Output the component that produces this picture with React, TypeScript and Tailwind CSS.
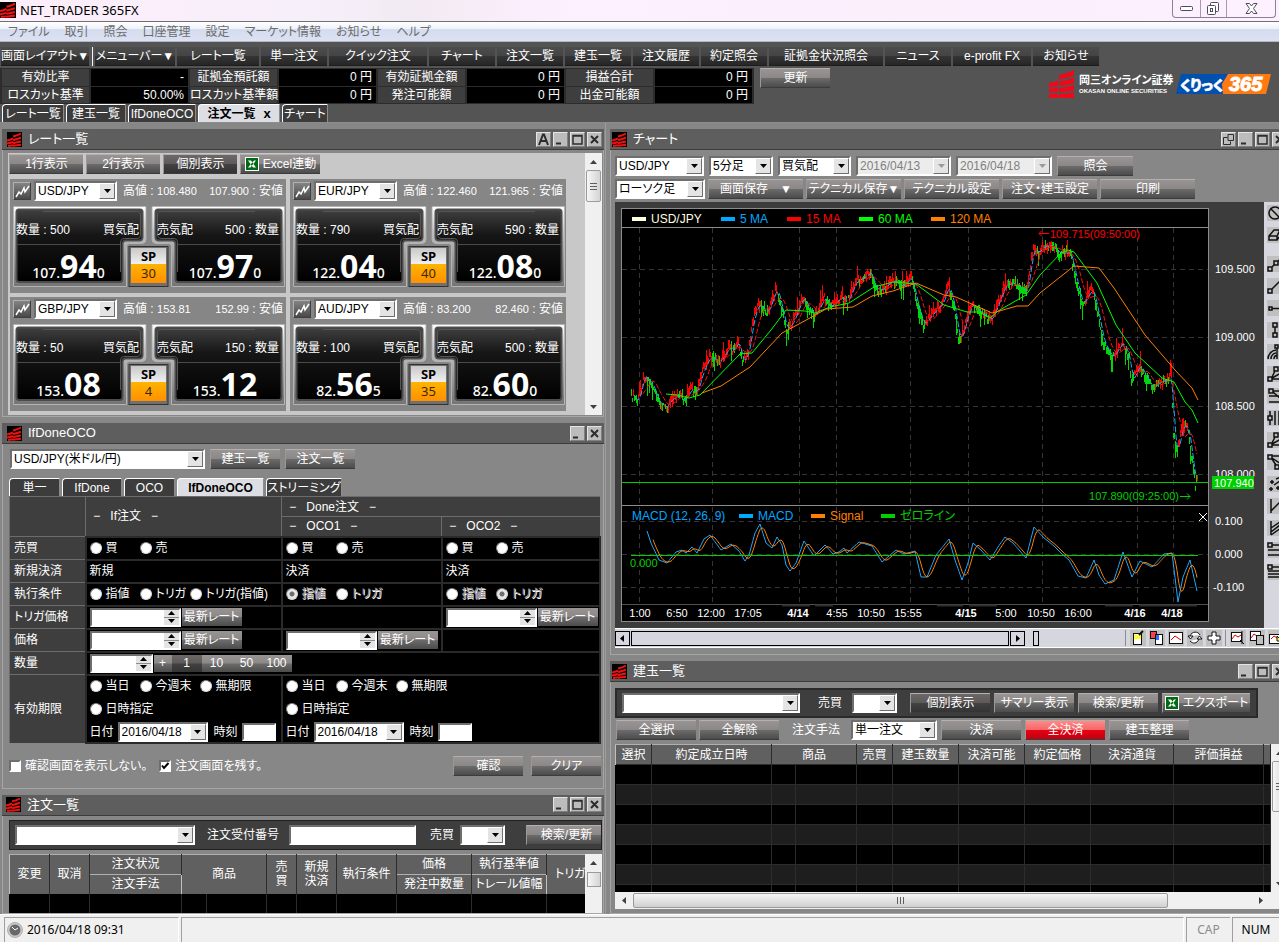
import type { ReactNode } from "react";

const BTN =
  "flex h-5 shrink-0 items-center justify-center overflow-hidden whitespace-nowrap border-t border-l border-t-[#b4b0b0] border-l-[#9c9898] border-b border-b-[#3c3c3c] text-white";
const BTN_LIGHT = "bg-[linear-gradient(#989494,#8c8888_48%,#6c6a6a_52%,#4c4c4c)]";
const BTN_DARK = "bg-[linear-gradient(#6c6868,#5e5a5a_48%,#434141_52%,#343434)]";
const BTN_RED = "bg-[linear-gradient(#ff8a86,#f46868_48%,#e60012_52%,#c00010)]";

const INSET =
  "border-2 border-t-[#6e6e6e] border-l-[#6e6e6e] border-r-white border-b-white bg-white text-black";

function Btn({
  children,
  w,
  tone = BTN_LIGHT,
}: {
  children: ReactNode;
  w: string;
  tone?: string;
}) {
  return (
    <button type="button" className={`${BTN} ${tone} ${w}`}>
      {children}
    </button>
  );
}

function Arrow({ dir = "down", color = "#000" }: { dir?: string; color?: string }) {
  const points: Record<string, string> = {
    down: "0,0 7,0 3.5,4",
    up: "0,4 7,4 3.5,0",
    left: "5,0 5,7 1,3.5",
    right: "2,0 2,7 6,3.5",
  };
  const tall = dir === "left" || dir === "right";
  return (
    <svg width="7" height={tall ? 7 : 4} aria-hidden="true">
      <polygon points={points[dir]} fill={color} />
    </svg>
  );
}

function Select({
  label,
  value = "",
  w,
  disabled = false,
}: {
  label: string;
  value?: string;
  w: string;
  disabled?: boolean;
}) {
  return (
    <div className={`relative h-5 shrink-0 ${INSET} ${w}`}>
      <select
        aria-label={label}
        defaultValue={value}
        disabled={disabled}
        className={`block h-4 w-full appearance-none pl-[2px] text-xs leading-4 outline-none ${
          disabled ? "bg-[#ececec] text-[#808080]" : "bg-white text-black"
        }`}
      >
        <option value={value}>{value}</option>
      </select>
      <span className="pointer-events-none absolute top-0 right-0 flex h-4 w-4 items-center justify-center border border-t-white border-l-white border-r-[#6e6e6e] border-b-[#6e6e6e] bg-[#e4e4e4]">
        <Arrow color={disabled ? "#9a9a9a" : "#000"} />
      </span>
    </div>
  );
}

function Stepper({ label, w }: { label: string; w: string }) {
  return (
    <div className={`flex h-[19px] shrink-0 ${INSET} ${w}`}>
      <input aria-label={label} className="w-0 flex-1 bg-white px-1 text-xs outline-none" />
      <div className="flex w-[15px] flex-col bg-[#e4e4e4]">
        <button type="button" aria-label={`${label} 増`} className="flex flex-1 items-center justify-center border-b border-[#8c8c8c]">
          <Arrow dir="up" />
        </button>
        <button type="button" aria-label={`${label} 減`} className="flex flex-1 items-center justify-center">
          <Arrow />
        </button>
      </div>
    </div>
  );
}

function Radio({
  name,
  label,
  w = "",
  checked = false,
  disabled = false,
}: {
  name: string;
  label: string;
  w?: string;
  checked?: boolean;
  disabled?: boolean;
}) {
  return (
    <label
      className={`flex shrink-0 items-center gap-1 whitespace-nowrap ${w} ${
        disabled ? "text-[#a8a8a8] [text-shadow:1px_1px_0_#ffffff]" : ""
      }`}
    >
      <input
        type="radio"
        name={name}
        defaultChecked={checked}
        disabled={disabled}
        className={`h-3 w-3 shrink-0 appearance-none rounded-full border border-t-[#808080] border-l-[#808080] border-r-[#d8d8d8] border-b-[#d8d8d8] ${
          checked ? "bg-[radial-gradient(#6e6e6e_2px,#e8e8e8_3px)]" : "bg-white"
        }`}
      />
      {label}
    </label>
  );
}

function Mark({ size = "h-[15px] w-[15px]" }: { size?: string }) {
  return (
    <svg viewBox="0 0 15 15" className={`shrink-0 bg-black ${size}`} aria-hidden="true">
      <g fill="none" stroke="#f01010" strokeWidth="2">
        <path d="M6 4.500Q10 3.800 14 1.500M0 8.500Q3 8 6 6.500M6 8.200Q10 7 14 5.800M0 11.500Q3 11 6 10M6 11.200Q10 10.200 14 9.500M1 14Q3 13.800 6 13.300M6 13.800Q10 13.200 14 12.800" />
      </g>
    </svg>
  );
}

function CaptionButton({ kind }: { kind: string }) {
  return (
    <button
      type="button"
      aria-label={kind}
      className="flex h-[15px] w-[15px] items-center justify-center border border-t-[#e4e4e4] border-l-[#e4e4e4] border-r-[#808080] border-b-[#808080] bg-[#bcbcbc]"
    >
      <svg width="13" height="13" viewBox="0 0 13 13" fill="none" stroke="#2c2c2c" aria-hidden="true">
        {kind === "min" && <path d="M2 10.500h5" strokeWidth="2" />}
        {kind === "max" && <path d="M2 2.500h9v8.500h-9zM2 3h9" strokeWidth="1.500" />}
        {kind === "close" && <path d="M3 3l7 7M10 3l-7 7" strokeWidth="2" />}
        {kind === "font" && <path d="M2 12 6 1.500h1L11 12M4 8h5" strokeWidth="2" />}
        {kind === "detach" && <path d="M6 1.500h5.500v6H6zM5.500 4.500h-4v7h7v-3" />}
      </svg>
    </button>
  );
}

function Pane({
  title,
  controls,
  children,
  className = "",
  headClass = "pl-[5px]",
  bodyClass = "",
}: {
  title: string;
  controls: string[];
  children: ReactNode;
  className?: string;
  headClass?: string;
  bodyClass?: string;
}) {
  return (
    <section className={`flex flex-col ${className}`}>
      <header className={`flex h-[21px] shrink-0 items-center gap-[6px] border-b border-[#3c3c3c] bg-[#5e5e5e] ${headClass}`}>
        <Mark />
        <h2 className="flex-1 text-[13px] leading-5 text-white">{title}</h2>
        <div className="flex gap-[2px] pr-[2px]">
          {controls.map((kind) => (
            <CaptionButton key={kind} kind={kind} />
          ))}
        </div>
      </header>
      <div className={`min-h-0 flex-1 overflow-hidden border border-t-0 border-[#a6a6a6] bg-[#878787] ${bodyClass}`}>
        {children}
      </div>
    </section>
  );
}

function VScroll({ thumb }: { thumb: string }) {
  return (
    <div className="flex w-[17px] shrink-0 flex-col items-center bg-[#f0f0f0]">
      <span className="flex h-[17px] shrink-0 items-center">
        <Arrow dir="up" color="#404040" />
      </span>
      <span
        className={`flex w-[15px] shrink-0 flex-col items-center justify-center gap-[2px] rounded-xs border border-[#9a9a9a] bg-[linear-gradient(90deg,#f6f6f6,#d4d4d4)] ${thumb}`}
      >
        <i className="h-px w-[7px] bg-[#606060]" />
        <i className="h-px w-[7px] bg-[#606060]" />
        <i className="h-px w-[7px] bg-[#606060]" />
      </span>
      <span className="flex-1" />
      <span className="flex h-[17px] shrink-0 items-center">
        <Arrow color="#404040" />
      </span>
    </div>
  );
}

function ExcelIcon() {
  return (
    <svg width="14" height="14" viewBox="0 0 14 14" className="mr-1 shrink-0" aria-hidden="true">
      <rect width="14" height="14" fill="#fff" />
      <rect x="1" y="1" width="12" height="12" fill="#006a14" />
      <path d="M3 3.500h3l5 7H8zM11 3.500H9L3 10.500h2.500z" fill="#fff" />
    </svg>
  );
}

/* ---------- top area ---------- */

const menus = ["ファイル", "取引", "照会", "口座管理", "設定", "マーケット情報", "お知らせ", "ヘルプ"];

const tools = [
  { label: "メニューバー▼", w: "w-20" },
  { label: "レート一覧", w: "w-[82px]" },
  { label: "単一注文", w: "w-[66px]" },
  { label: "クイック注文", w: "w-[98px]" },
  { label: "チャート", w: "w-[66px]" },
  { label: "注文一覧", w: "w-[66px]" },
  { label: "建玉一覧", w: "w-[66px]" },
  { label: "注文履歴", w: "w-[66px]" },
  { label: "約定照会", w: "w-[66px]" },
  { label: "証拠金状況照会", w: "w-[114px]" },
  { label: "ニュース", w: "w-[66px]" },
  { label: "e-profit FX", w: "w-[78px]" },
  { label: "お知らせ", w: "w-[66px]" },
];

const account = [
  [
    ["有効比率", "-"],
    ["証拠金預託額", "0 円"],
    ["有効証拠金額", "0 円"],
    ["損益合計", "0 円"],
  ],
  [
    ["ロスカット基準", "50.00%"],
    ["ロスカット基準額", "0 円"],
    ["発注可能額", "0 円"],
    ["出金可能額", "0 円"],
  ],
];

function TitleBar() {
  return (
    <header className="flex h-[22px] shrink-0 items-start gap-1 border-b border-[#707070] bg-[linear-gradient(90deg,#fdeefb,#f6effa_26%,#f2eaf2_32%,#fdf0ff_45%,#fbeffc_70%,#fdf0ff)] pr-[3px] font-['Noto_Sans','Noto_Sans_CJK_JP',sans-serif]">
      <div className="pt-[2px]">
        <Mark size="h-4 w-4" />
      </div>
      <h1 className="flex-1 text-[13px] leading-5 text-black">NET_TRADER 365FX</h1>
      <div className="flex h-[18px] overflow-hidden rounded-b border border-t-0 border-[#8a8290]">
        <button type="button" aria-label="最小化" className="flex w-7 items-center justify-center border-r border-[#a49cac]">
          <svg width="13" height="6" aria-hidden="true">
            <rect x="0.500" y="0.500" width="12" height="4" rx="1" fill="#fff" stroke="#4c4c5c" />
          </svg>
        </button>
        <button type="button" aria-label="元に戻す" className="flex w-[26px] items-center justify-center border-r border-[#a49cac]">
          <svg width="13" height="13" fill="#fff" stroke="#4c4c5c" aria-hidden="true">
            <rect x="3.500" y="0.500" width="8" height="9" rx="1" />
            <rect x="0.500" y="3.500" width="8" height="9" rx="1" />
            <rect x="3.500" y="6.500" width="2" height="3" />
          </svg>
        </button>
        <button type="button" aria-label="閉じる" className="flex w-12 items-center justify-center">
          <svg width="13" height="11" viewBox="0 0 13 11" aria-hidden="true">
            <path
              d="M1 .5h3.500L6.500 3l2-2.500H12L8.500 5.500 12 10.500H8.500l-2-2.500-2 2.500H1l3.500-5z"
              fill="#fff"
              stroke="#4c4c5c"
            />
          </svg>
        </button>
      </div>
    </header>
  );
}

function Logos() {
  return (
    <div className="mr-2 flex items-center gap-1 self-start pt-[2px]">
      <svg width="26" height="28" viewBox="0 0 26 28" fill="#f00818" aria-hidden="true">
        <path d="M10 5Q18 4 25 0V5.500Q18 8.500 10 9.500zM10 11.500Q18 10.500 25 7.500V13Q18 15.500 10 16zM10 18Q18 17 25 15V20.500Q18 22 10 22.500zM10 24Q18 23.500 25 22.500V28H10zM0 13Q5 12.500 9 10.500V15.500Q5 17 0 17.500zM0 19Q5 18.500 9 17V21.500Q5 22.500 0 23zM0 24.500Q5 24 9 23.500V28H0z" />
      </svg>
      <div className="w-[93px] whitespace-nowrap text-white">
        <p className="text-[11px] leading-[14px] font-bold">岡三オンライン証券</p>
        <p className="text-[6px] leading-[9px] font-bold">OKASAN ONLINE SECURITIES</p>
      </div>
      <svg width="95" height="21" viewBox="0 0 95 21" aria-hidden="true">
        <path d="M5 0h42l-5 20H0z" fill="#0050b0" />
        <path d="M47 0h48l-5 20H42z" fill="#ff7a10" />
        <path d="M47 0h5l-6 10 1 10h-5l-3-10z" fill="#0050b0" />
        <text x="4" y="16" fontSize="14" fontWeight="900" fill="#fff" stroke="#fff" strokeWidth=".5" fontFamily="Noto Sans CJK JP">
          くりっく
        </text>
        <text x="53" y="17" fontSize="20" fontWeight="900" fontStyle="italic" fill="#fff" stroke="#fff" fontFamily="Liberation Sans">
          365
        </text>
      </svg>
    </div>
  );
}

function Tab({ label, w, active = false, closable = false }: { label: string; w: string; active?: boolean; closable?: boolean }) {
  return (
    <button
      type="button"
      role="tab"
      aria-selected={active}
      className={`flex h-[18px] shrink-0 items-center justify-center gap-2 overflow-hidden rounded-tl border-t border-l border-r border-t-white border-l-white border-r-[#8c8c8c] whitespace-nowrap ${w} ${
        active ? "bg-[#dcdee4] font-bold text-black" : "bg-[#3c3c3c] text-white"
      }`}
    >
      {label}
      {closable && <span className="text-[13px] leading-4 font-bold">x</span>}
    </button>
  );
}

function TopArea() {
  return (
    <div className="shrink-0 border-b border-[#8c8c8c] bg-[#545454]">
      <nav className="flex h-5 items-center gap-[15px] border-b border-[#b4b8c4] bg-[linear-gradient(#ffffff,#eef2fa_35%,#d4dcee_40%,#dce2f4)] pl-2 text-[#6c6c6c]">
        {menus.map((menu) => (
          <a key={menu} href="#" className="text-xs leading-5">
            {menu}
          </a>
        ))}
      </nav>
      <div className="flex gap-[2px] pt-[5px] pl-px">
        {[{ label: "画面レイアウト▼", w: "w-[88px]" }, ...tools].map((tool, i) => (
          <div key={tool.label} className="flex">
            <button
              type="button"
              className={`h-[19px] overflow-hidden border-b border-[#1c1c1c] bg-[linear-gradient(#4c4c4c,#444444_50%,#343434_52%,#262626)] whitespace-nowrap text-white ${tool.w}`}
            >
              {tool.label}
            </button>
            {i === 0 && <span className="ml-[3px] w-px bg-[#f4f4f4]" />}
          </div>
        ))}
      </div>
      <div className="flex h-[38px] pt-[2px]">
        <table className="h-[36px] w-[754px] table-fixed border-separate border-spacing-x-[2px] border-spacing-y-px bg-[#2c2c2c] text-white">
          <tbody>
            {account.map((row) => (
              <tr key={row[0][0]}>
                {row.map(([label, value]) => [
                  <th key={label} scope="row" className="h-4 w-[87px] bg-[#3e3e3e] text-center leading-4 font-normal whitespace-nowrap">
                    {label}
                  </th>,
                  <td key={`${label}-v`} className="h-4 bg-black pr-1 text-right leading-4">
                    {value}
                  </td>,
                ])}
              </tr>
            ))}
          </tbody>
        </table>
        <div className="ml-[6px]">
          <Btn w="w-[70px]">更新</Btn>
        </div>
        <div className="flex-1" />
        <Logos />
      </div>
      <div role="tablist" className="flex gap-[2px] pl-[2px]">
        <Tab label="レート一覧" w="w-[62px]" />
        <Tab label="建玉一覧" w="w-[60px]" />
        <Tab label="IfDoneOCO" w="w-[68px]" />
        <Tab label="注文一覧" w="w-[82px]" active closable />
        <Tab label="チャート" w="w-[46px]" />
      </div>
    </div>
  );
}

/* ---------- rate list ---------- */

const rates = [
  { pair: "USD/JPY", high: "108.480", low: "107.900", bidQty: "500", askQty: "500", bid: ["107.", "94", "0"], ask: ["107.", "97", "0"], sp: "30" },
  { pair: "EUR/JPY", high: "122.460", low: "121.965", bidQty: "790", askQty: "590", bid: ["122.", "04", "0"], ask: ["122.", "08", "0"], sp: "40" },
  { pair: "GBP/JPY", high: "153.81", low: "152.99", bidQty: "50", askQty: "150", bid: ["153.", "08", ""], ask: ["153.", "12", ""], sp: "4" },
  { pair: "AUD/JPY", high: "83.200", low: "82.460", bidQty: "100", askQty: "500", bid: ["82.", "56", "5"], ask: ["82.", "60", "0"], sp: "35" },
];

function QuoteFrame({ id }: { id: string }) {
  const half = (
    <>
      <path d="M0 0H133.500V34Q133.500 38 129.500 38H118Q114 38 114 42V81H0z" fill="#6c6c6c" />
      <path d="M.5.5H133V34Q133 37.500 129 37.500H117Q113.500 37.500 113.500 41V80.500H.5z" fill={`url(#${id}-rim)`} stroke="#b4b4b4" />
      <path
        d="M6 3.500H127Q129.500 3.500 129.500 6V31Q129.500 34.500 126 34.500H113Q109.500 34.500 109.500 38V73Q109.500 76 107 76H6Q3.500 76 3.500 73V6Q3.500 3.500 6 3.500z"
        fill={`url(#${id}-glass)`}
        stroke="#4c4c4c"
        strokeWidth="2"
      />
      <path d="M30 5.500H124.500Q127.500 5.500 127.500 8V29Q127.500 32.500 124 32.500H111Q107.500 32.500 107.500 36V66" fill="none" stroke="#565656" />
      <path d="M4 38.500h103" stroke="#4a4a4a" />
    </>
  );
  return (
    <svg viewBox="0 0 272 81" className="col-start-1 row-start-1 h-[81px] w-[272px]" aria-hidden="true">
      <defs>
        <linearGradient id={`${id}-rim`} x2="0" y2="1">
          <stop offset="0" stopColor="#fff" />
          <stop offset=".3" stopColor="#c4c4c4" />
          <stop offset="1" stopColor="#747474" />
        </linearGradient>
        <linearGradient id={`${id}-glass`} x2="0" y2="1">
          <stop offset="0" stopColor="#404040" />
          <stop offset=".35" stopColor="#161616" />
          <stop offset="1" stopColor="#000" />
        </linearGradient>
      </defs>
      {half}
      <g transform="translate(272 0) scale(-1 1)">{half}</g>
      <rect x="116" y="40.500" width="39" height="40" fill="#707070" stroke="#303030" />
    </svg>
  );
}

function Price({ parts, w }: { parts: string[]; w: string }) {
  return (
    <p className={`flex items-baseline justify-center font-['Noto_Sans',sans-serif] text-sm leading-10 font-medium ${w}`}>
      {parts[0]}
      <b className="text-[32px] leading-10">{parts[1]}</b>
      {parts[2]}
    </p>
  );
}

function RateCard({ rate }: { rate: (typeof rates)[number] }) {
  return (
    <article className="bg-[#868686] px-[3px] pt-[2px] pb-[6px] text-white">
      <div className="flex h-5 items-center">
        <button
          type="button"
          aria-label={`${rate.pair} チャート`}
          className="mr-[3px] flex h-[18px] w-[18px] items-center justify-center border border-t-[#b0b0b0] border-l-[#b0b0b0] border-r-[#404040] border-b-[#404040] bg-[linear-gradient(#848484,#484848)]"
        >
          <svg width="15" height="13" fill="none" stroke="#fff" strokeWidth="1.500" aria-hidden="true">
            <path d="M1 12l3-5 2 2 3-6 1 4 4-6" />
          </svg>
        </button>
        <Select label="通貨ペア" value={rate.pair} w="w-[83px]" />
        <span className="ml-[6px] flex-1">
          高値 : <span className="text-[11px]">{rate.high}</span>
        </span>
        <span>
          <span className="text-[11px]">{rate.low}</span> : 安値
        </span>
      </div>
      <div className="mt-[5px] grid w-[272px] grid-cols-1 grid-rows-1">
        <QuoteFrame id={rate.pair.replace("/", "")} />
        <div className="z-10 col-start-1 row-start-1 flex h-[81px] flex-col">
          <div className="flex h-[38px] items-end pr-[6px] pb-[5px] pl-[3px] leading-[18px]">
            <span className="w-[87px]">数量 : {rate.bidQty}</span>
            <span className="w-[54px]">買気配</span>
            <span>売気配</span>
            <span className="flex-1 text-right">{rate.askQty} : 数量</span>
          </div>
          <div className="flex h-[43px] pt-[2px] pl-[3px]">
            <Price parts={rate.bid} w="w-[105px]" />
            <dl className="mx-[10px] w-[35px] shrink-0 text-center font-['Noto_Sans',sans-serif] text-[13px]">
              <dt className="mt-[2px] h-4 bg-[linear-gradient(#c8c8c8,#f0f0f0)] leading-4 font-bold text-black">SP</dt>
              <dd className="h-[19px] bg-[linear-gradient(#ffb400,#ff9000)] leading-[19px] text-[#3c2800]">{rate.sp}</dd>
            </dl>
            <Price parts={rate.ask} w="w-[98px]" />
          </div>
        </div>
      </div>
    </article>
  );
}

function RatePane() {
  return (
    <Pane title="レート一覧" controls={["font", "min", "max", "close"]} bodyClass="pt-[3px] pl-[5px] pr-px pb-px">
      <div className="flex h-[262px] overflow-hidden bg-[#c8c8c8]">
        <div className="flex-1 pt-px pl-px">
          <div className="flex gap-[3px]">
            <Btn w="w-[74px]">1行表示</Btn>
            <Btn w="w-[74px]">2行表示</Btn>
            <Btn w="w-[74px]" tone={BTN_DARK}>
              個別表示
            </Btn>
            <Btn w="w-20">
              <ExcelIcon />
              Excel連動
            </Btn>
          </div>
          <div className="mt-[5px] ml-px grid grid-cols-[276px_276px] gap-1">
            {rates.map((rate) => (
              <RateCard key={rate.pair} rate={rate} />
            ))}
            <div className="h-2 bg-[#868686]" />
            <div className="h-2 bg-[#868686]" />
          </div>
        </div>
        <VScroll thumb="h-8" />
      </div>
    </Pane>
  );
}

/* ---------- order entry ---------- */

const TH = "border-t border-l border-[#6c6c6c] bg-[#3e3e3e] pl-1 text-left font-normal";
const TD = "border-2 border-[#2a2a2a] bg-black pl-[3px]";

function ExpiryFields({ name }: { name: string }) {
  return (
    <div className="flex flex-col gap-[3px]">
      <div className="flex h-5 items-center">
        <Radio name={name} label="当日" w="w-[50px]" />
        <Radio name={name} label="今週末" w="w-[60px]" />
        <Radio name={name} label="無期限" />
      </div>
      <div className="flex h-5 items-center">
        <Radio name={name} label="日時指定" />
      </div>
      <div className="flex h-5 items-center gap-1">
        <span>日付</span>
        <Select label="日付" value="2016/04/18" w="w-[90px]" />
        <label className="ml-[2px] flex items-center gap-1">
          時刻
          <input className={`h-[18px] w-[34px] ${INSET}`} />
        </label>
      </div>
    </div>
  );
}

function LatestRate({ label }: { label: string }) {
  return (
    <div className="flex items-center gap-px">
      <Stepper label={label} w="w-[91px]" />
      <button type="button" className={`h-[18px] w-[60px] text-white ${BTN_LIGHT}`}>
        最新レート
      </button>
    </div>
  );
}

function BuySell({ name }: { name: string }) {
  return (
    <div className="flex">
      <Radio name={name} label="買" w="w-[50px]" />
      <Radio name={name} label="売" />
    </div>
  );
}

function OrderEntryPane() {
  return (
    <Pane title="IfDoneOCO" controls={["min", "close"]} bodyClass="pl-[6px] pr-[2px] pt-[5px] pb-[12px]">
      <div className="flex gap-[5px] pl-px">
        <Select label="商品" value="USD/JPY(米ドル/円)" w="w-[195px]" />
        <Btn w="w-[70px]">建玉一覧</Btn>
        <Btn w="w-[70px]">注文一覧</Btn>
      </div>
      <div role="tablist" className="mt-[9px] flex gap-[2px]">
        <Tab label="単一" w="w-[51px]" />
        <Tab label="IfDone" w="w-[60px]" />
        <Tab label="OCO" w="w-[51px]" />
        <Tab label="IfDoneOCO" w="w-[87px]" active />
        <Tab label="ストリーミング" w="w-[76px]" />
      </div>
      <table className="w-full table-fixed border-collapse text-white">
        <colgroup>
          <col className="w-[76px]" />
          <col className="w-[196px]" />
          <col className="w-[160px]" />
          <col />
        </colgroup>
        <thead>
          <tr className="h-5">
            <td rowSpan={2} className={TH} />
            <th rowSpan={2} scope="col" className={`${TH} whitespace-pre`}>
              {" −   If注文   −"}
            </th>
            <th colSpan={2} scope="colgroup" className={`${TH} whitespace-pre`}>
              {" −   Done注文   −"}
            </th>
          </tr>
          <tr className="h-5">
            <th scope="col" className={`${TH} whitespace-pre`}>
              {" −   OCO1   −"}
            </th>
            <th scope="col" className={`${TH} whitespace-pre`}>
              {" −   OCO2   −"}
            </th>
          </tr>
        </thead>
        <tbody>
          <tr className="h-[23px]">
            <th scope="row" className={TH}>売買</th>
            <td className={TD}><BuySell name="if-side" /></td>
            <td className={TD}><BuySell name="oco1-side" /></td>
            <td className={TD}><BuySell name="oco2-side" /></td>
          </tr>
          <tr className="h-[23px]">
            <th scope="row" className={TH}>新規決済</th>
            <td className={TD}>新規</td>
            <td className={TD}>決済</td>
            <td className={TD}>決済</td>
          </tr>
          <tr className="h-[23px]">
            <th scope="row" className={TH}>執行条件</th>
            <td className={TD}>
              <div className="flex">
                <Radio name="if-cond" label="指値" w="w-[50px]" />
                <Radio name="if-cond" label="トリガ" w="w-[50px]" />
                <Radio name="if-cond" label="トリガ(指値)" />
              </div>
            </td>
            <td className={TD}>
              <div className="flex">
                <Radio name="oco1-cond" label="指値" w="w-[50px]" checked disabled />
                <Radio name="oco1-cond" label="トリガ" disabled />
              </div>
            </td>
            <td className={TD}>
              <div className="flex">
                <Radio name="oco2-cond" label="指値" w="w-[50px]" disabled />
                <Radio name="oco2-cond" label="トリガ" checked disabled />
              </div>
            </td>
          </tr>
          <tr className="h-[23px]">
            <th scope="row" className={TH}>トリガ価格</th>
            <td className={TD}><LatestRate label="トリガ価格" /></td>
            <td className={TD} />
            <td className={TD}><LatestRate label="OCO2トリガ価格" /></td>
          </tr>
          <tr className="h-[23px]">
            <th scope="row" className={TH}>価格</th>
            <td className={TD}><LatestRate label="価格" /></td>
            <td className={TD}><LatestRate label="OCO1価格" /></td>
            <td className={TD} />
          </tr>
          <tr className="h-[23px]">
            <th scope="row" className={TH}>数量</th>
            <td colSpan={3} className={TD}>
              <div className="flex items-center">
                <Stepper label="数量" w="w-[63px]" />
                <button type="button" className={`ml-px h-[17px] w-[18px] ${BTN_LIGHT}`}>+</button>
                <button type="button" className={`h-[17px] w-[30px] ${BTN_DARK}`}>1</button>
                <button type="button" className={`h-[17px] w-[30px] ${BTN_LIGHT}`}>10</button>
                <button type="button" className={`h-[17px] w-[30px] ${BTN_LIGHT}`}>50</button>
                <button type="button" className={`h-[17px] w-[30px] ${BTN_LIGHT}`}>100</button>
              </div>
            </td>
          </tr>
          <tr className="h-[68px]">
            <th scope="row" className={TH}>有効期限</th>
            <td className={TD}><ExpiryFields name="if-expiry" /></td>
            <td colSpan={2} className={TD}><ExpiryFields name="done-expiry" /></td>
          </tr>
        </tbody>
      </table>
      <div className="mt-3 flex items-center gap-3">
        <label className="flex items-center gap-1 text-white">
          <input type="checkbox" className={`h-3 w-3 appearance-none ${INSET}`} />
          確認画面を表示しない。
        </label>
        <label className="flex flex-1 items-center gap-1 text-white">
          <span className="grid">
            <input type="checkbox" defaultChecked className={`col-start-1 row-start-1 h-3 w-3 appearance-none ${INSET}`} />
            <svg width="12" height="12" fill="none" stroke="#000" strokeWidth="2" className="pointer-events-none col-start-1 row-start-1" aria-hidden="true">
              <path d="M3 5.500l2 2.500 4.500-5" />
            </svg>
          </span>
          注文画面を残す。
        </label>
        <div className="flex gap-2">
          <Btn w="w-[70px]">確認</Btn>
          <Btn w="w-[70px]">クリア</Btn>
        </div>
      </div>
    </Pane>
  );
}

/* ---------- order list ---------- */

const GRID_TH =
  "overflow-hidden border-t border-l border-r border-t-[#b0b0b0] border-l-[#c0c0c0] border-r-[#2c2c2c] bg-[#606060] text-center font-normal whitespace-nowrap leading-[14px]";

function OrderListPane() {
  return (
    <Pane
      title="注文一覧"
      controls={["min", "max", "close"]}
      className="min-h-0 flex-1"
      headClass="pl-1"
      bodyClass="flex flex-col pt-1 pl-[6px] pr-px"
    >
      <div className="flex h-[30px] shrink-0 items-center overflow-hidden border border-[#202020] bg-[#3e3e3e] pl-[5px] whitespace-nowrap text-white">
        <Select label="商品" w="w-[180px]" />
        <label className="ml-3 flex shrink-0 items-center gap-[10px]">
          注文受付番号
          <input className={`h-5 w-[127px] ${INSET}`} />
        </label>
        <span className="mr-[6px] ml-[14px]">売買</span>
        <Select label="売買" w="w-[45px]" />
        <div className="ml-[21px]">
          <Btn w="w-[80px]">検索/更新</Btn>
        </div>
      </div>
      <div className="mt-1 flex min-h-0 flex-1">
        <div className="min-w-0 flex-1 overflow-hidden bg-black">
          <table className="w-[622px] table-fixed border-collapse text-white">
            <colgroup>
              <col className="w-10" />
              <col className="w-10" />
              <col className="w-[92px]" />
              <col className="w-[25px]" />
              <col className="w-[60px]" />
              <col className="w-[30px]" />
              <col className="w-10" />
              <col className="w-[60px]" />
              <col className="w-[75px]" />
              <col className="w-[75px]" />
              <col className="w-[85px]" />
            </colgroup>
            <thead>
              <tr className="h-5">
                <th rowSpan={2} className={GRID_TH}>変更</th>
                <th rowSpan={2} className={GRID_TH}>取消</th>
                <th className={GRID_TH}>注文状況</th>
                <th rowSpan={2} colSpan={2} className={GRID_TH}>商品</th>
                <th rowSpan={2} className={GRID_TH}>売<br />買</th>
                <th rowSpan={2} className={GRID_TH}>新規<br />決済</th>
                <th rowSpan={2} className={GRID_TH}>執行条件</th>
                <th className={GRID_TH}>価格</th>
                <th className={GRID_TH}>執行基準値</th>
                <th rowSpan={2} className={`${GRID_TH} pl-2 text-left`}>トリガ価格</th>
              </tr>
              <tr className="h-5">
                <th className={GRID_TH}>注文手法</th>
                <th className={GRID_TH}>発注中数量</th>
                <th className={GRID_TH}>トレール値幅</th>
              </tr>
            </thead>
            <tbody>
              <tr className="h-10">
                {Array.from({ length: 11 }, (_, i) => (
                  <td key={i} className="border-r border-[#2c2c2c]" />
                ))}
              </tr>
            </tbody>
          </table>
        </div>
        <div className="flex w-[17px] shrink-0 flex-col items-center bg-[#f0f0f0]">
          <span className="flex h-[18px] items-center">
            <Arrow dir="up" color="#404040" />
          </span>
          <span className="h-[15px] w-[14px] border border-[#9a9a9a] bg-[linear-gradient(90deg,#f6f6f6,#d4d4d4)]" />
        </div>
      </div>
    </Pane>
  );
}

/* ---------- chart ---------- */

type Point = [number, number];

const price: Point[] = [
  [16, 193], [22, 200], [29, 173], [37, 183], [43, 200], [51, 206], [55, 198], [64, 193], [70, 198], [76, 186],
  [81, 191], [87, 170], [94, 155], [104, 160], [114, 145], [119, 148], [123, 138], [127, 161], [133, 150], [137, 120],
  [143, 101], [152, 111], [161, 86], [165, 101], [171, 128], [177, 121], [184, 103], [188, 95], [194, 108], [200, 113],
  [209, 95], [215, 105], [226, 95], [232, 100], [240, 80], [249, 75], [256, 70], [259, 86], [266, 88], [278, 78],
  [287, 85], [296, 75], [301, 100], [308, 123], [316, 113], [327, 101], [333, 83], [339, 106], [343, 136], [346, 135],
  [352, 113], [357, 101], [362, 108], [376, 118], [383, 100], [390, 83], [400, 81], [411, 91], [415, 63], [418, 46],
  [423, 51], [427, 45], [434, 43], [444, 51], [455, 51], [461, 80], [467, 103], [477, 86], [482, 110], [488, 140],
  [497, 156], [507, 140], [514, 156], [516, 180], [524, 163], [537, 186], [545, 180], [556, 176], [558, 236], [562, 250],
  [566, 226], [572, 223], [576, 253], [580, 283], [582, 273],
];

const ma60: Point[] = [
  [51, 192], [62, 193], [74, 196], [85, 193], [125, 152], [137, 151], [156, 128], [171, 108], [190, 109], [200, 111],
  [215, 105], [234, 101], [259, 85], [278, 80], [301, 82], [329, 103], [352, 110], [364, 110], [375, 116], [383, 109],
  [411, 93], [425, 73], [446, 51], [453, 48], [459, 50], [482, 81], [501, 123], [520, 151], [547, 176], [559, 180],
  [570, 200], [577, 208], [583, 221],
];

const ma120: Point[] = [
  [87, 191], [106, 184], [135, 165], [167, 131], [184, 122], [211, 107], [238, 105], [257, 94], [278, 89], [301, 81],
  [329, 93], [341, 95], [377, 111], [402, 104], [413, 104], [425, 91], [459, 64], [484, 66], [499, 86], [530, 133],
  [560, 168], [577, 186], [583, 198],
];

const macd: Point[] = [
  [32, 329], [36, 341], [44, 358], [52, 361], [61, 350], [67, 348], [71, 351], [77, 345], [82, 351], [89, 337],
  [95, 333], [106, 348], [116, 342], [124, 349], [130, 359], [134, 353], [140, 331], [145, 322], [151, 341], [157, 346],
  [162, 335], [167, 343], [171, 363], [175, 369], [181, 361], [189, 339], [199, 354], [210, 343], [218, 352], [224, 350],
  [229, 346], [232, 351], [244, 340], [257, 344], [267, 360], [281, 348], [289, 352], [300, 349], [306, 375], [312, 375],
  [321, 353], [334, 337], [340, 358], [347, 378], [353, 361], [358, 341], [366, 348], [375, 358], [383, 345], [390, 335],
  [398, 341], [411, 356], [419, 325], [428, 335], [439, 344], [447, 352], [454, 358], [463, 374], [471, 376], [479, 358],
  [484, 373], [490, 382], [499, 378], [508, 350], [517, 375], [525, 359], [537, 365], [549, 352], [557, 351], [563, 400],
  [568, 375], [575, 358], [582, 389],
];

// one sample per horizontal pixel
function sample(points: Point[]): Point[] {
  const out: Point[] = [];
  for (let i = 0; i < points.length - 1; i++) {
    const [x0, y0] = points[i];
    const [x1, y1] = points[i + 1];
    for (let x = x0; x < x1; x++) out.push([x, y0 + ((y1 - y0) * (x - x0)) / (x1 - x0)]);
  }
  out.push(points[points.length - 1]);
  return out;
}

function average(points: Point[], n: number): Point[] {
  return points.slice(n - 1).map(([x], i) => {
    const part = points.slice(i, i + n);
    return [x, part.reduce((sum, p) => sum + p[1], 0) / n];
  });
}

function toLine(points: Point[]) {
  return points.map(([x, y]) => `${x},${y.toFixed(1)}`).join(" ");
}

const noise = (n: number) => {
  const v = Math.sin(n * 12.9898) * 43758.5453;
  return v - Math.floor(v);
};

const dense = sample(price);
const candles = dense.map(([x, y], i) => {
  const mid = y + (noise(i) - 0.5) * 7;
  const spike = noise(i + 900) > 0.88 ? 9 : 0;
  const prev = dense[Math.max(0, i - 3)][1];
  const up = prev - y + (noise(i + 300) - 0.5) * 8 > 0;
  return {
    x,
    top: Math.max(38, mid - 1 - noise(i + 50) * 5 - (up ? spike : 0)),
    bottom: Math.min(289, mid + 1 + noise(i + 80) * 5 + (up ? 0 : spike)),
    color: up ? "#ff0000" : "#00d800",
  };
});
const denseMacd = sample(macd);

const legend = [
  { label: "USD/JPY", color: "#ffffe0", x: 17 },
  { label: "5 MA", color: "#00a8ff", x: 106 },
  { label: "15 MA", color: "#ff0000", x: 172 },
  { label: "60 MA", color: "#00ff00", x: 244 },
  { label: "120 MA", color: "#ff8000", x: 316 },
];

const macdLegend = [
  { label: "MACD", color: "#00a8ff", x: 124 },
  { label: "Signal", color: "#ff8000", x: 196 },
  { label: "ゼロライン", color: "#00d000", x: 266 },
];

const times: { x: number; label: string; bold?: boolean }[] = [
  { x: 25, label: "1:00" },
  { x: 62, label: "6:50" },
  { x: 96, label: "12:00" },
  { x: 133, label: "17:05" },
  { x: 183, label: "4/14", bold: true },
  { x: 222, label: "4:55" },
  { x: 256, label: "10:50" },
  { x: 293, label: "15:55" },
  { x: 351, label: "4/15", bold: true },
  { x: 391, label: "5:00" },
  { x: 426, label: "10:50" },
  { x: 463, label: "16:00" },
  { x: 520, label: "4/16", bold: true },
  { x: 557, label: "4/18", bold: true },
];

const scale: [number, string][] = [
  [67, "109.500"],
  [135, "109.000"],
  [204, "108.500"],
  [272, "108.000"],
  [319, "0.100"],
  [352, "0.000"],
  [385, "-0.100"],
];

function PriceChart() {
  return (
    <svg
      viewBox="0 0 649 426"
      preserveAspectRatio="xMinYMin meet"
      className="h-[426px] min-w-0 flex-1 bg-[#3c3c3c]"
      fontFamily="'Liberation Sans', 'Noto Sans CJK JP', sans-serif"
      fontSize="12"
      role="img"
      aria-label="USD/JPY 5分足チャート"
    >
      <rect x="6.500" y="6.500" width="587" height="413" fill="#000" stroke="#8c8c8c" />
      <g stroke="#343434" strokeDasharray="5 4">
        {[24, 97, 184, 221, 295, 353, 427, 522, 558].map((x) => (
          <path key={x} d={`M${x}.500 26V401`} />
        ))}
        {scale.map(([y]) => (
          <path key={y} d={`M7 ${y}.500H593`} />
        ))}
      </g>
      <path d="M7 25.500H593M7 303.500H593" stroke="#8c8c8c" />
      <path d="M7 402.500H593" stroke="#505050" />
      <path d="M167 403.500h28M200 403.500h18M322 403.500h26M354 403.500h28M490 403.500h28M524 403.500h58" stroke="#2e2e2e" strokeWidth="2" />

      {candles.map((c) => (
        <path key={c.x} d={`M${c.x}.500 ${c.top.toFixed(0)}V${c.bottom.toFixed(0)}`} stroke={c.color} />
      ))}
      <g fill="none">
        <polyline points={toLine(average(dense, 5))} stroke="#20a8ff" strokeDasharray="6 2" />
        <polyline points={toLine(average(dense, 13))} stroke="#ff1010" strokeDasharray="5 2" />
        <polyline points={toLine(ma60)} stroke="#00ff00" />
        <polyline points={toLine(ma120)} stroke="#ff8000" />
        <polyline points={toLine(denseMacd)} stroke="#20a8ff" />
        <polyline points={toLine(average(denseMacd, 7))} stroke="#ff8000" />
      </g>
      <path d="M7 280.500H593" stroke="#00d000" />
      <path d="M16 353.500H583" stroke="#00d000" />

      {legend.map((item) => (
        <g key={item.label} fill={item.color}>
          <rect x={item.x} y="15" width="14" height="4" />
          <text x={item.x + 19} y="21">{item.label}</text>
        </g>
      ))}
      <text x="17" y="318" fill="#00a8ff">MACD (12, 26, 9)</text>
      {macdLegend.map((item) => (
        <g key={item.label} fill={item.color}>
          <rect x={item.x} y="312" width="14" height="4" />
          <text x={item.x + 19} y="318">{item.label}</text>
        </g>
      ))}
      <path d="M434 31.500h-10M427 28.500l-3 3 3 3" fill="none" stroke="#ff0000" />
      <text x="435" y="36" fontSize="11" fill="#ff0000">109.715(09:50:00)</text>
      <text x="564" y="298" fontSize="11" fill="#00d000" textAnchor="end">107.890(09:25:00)</text>
      <path d="M565 294.500h10M572 291.500l3 3-3 3" fill="none" stroke="#00d000" />
      <text x="15" y="365" fontSize="11" fill="#00d000">0.000</text>
      <path d="M584 311l8 8M592 311l-8 8" stroke="#fff" />

      {times.map((t) => (
        <text key={t.x} x={t.x} y="415" fontSize="11" fill="#fff" textAnchor="middle" fontWeight={t.bold ? 700 : 400}>
          {t.label}
        </text>
      ))}
      {scale.map(([y, label]) => (
        <text key={label} x={label[0] === "-" ? 598 : 600} y={y + 4} fontSize="11" fill="#fff">
          {label}
        </text>
      ))}
      <rect x="597" y="274" width="42" height="13" fill="#00d000" />
      <text x="599" y="285" fontSize="11" fill="#fff">107.940</text>
    </svg>
  );
}

const drawTools = [
  { name: "消去", d: "M8 2a6 6 0 1 0 .1 0M4 4l8 8" },
  { name: "消しゴム", d: "M2 9h8v4H2zM2 9l5-6h6l-3 6M13 3v6l-3 4" },
  { name: "折れ線", d: "M1 11h4v4H1zM5 11l3-3M7 5h4v4H7zM11 5l4-3" },
  { name: "線分", d: "M1 11h4v4H1zM5 11l9-9" },
  { name: "水平線", d: "M2 7h3v3H2zM5 8.500h10" },
  { name: "垂直線", d: "M6 1h4v4H6zM6 11h4v4H6zM8 5v6" },
  { name: "アーク", d: "M8 1h3v3H8zM1 15a9 9 0 0 1 8-9M4 15a6 6 0 0 1 5-6M7 15a4 4 0 0 1 3-4M10 4v11" },
  { name: "ファン", d: "M1 11h4v4H1zM7 1h4v4H7zM5 11l3-6M5 12l9-5M5 13h9" },
  { name: "リトレース", d: "M2 1h4v4H2zM2 8h12M2 14h12M6 4l8 7M6 3h8" },
  { name: "時間帯", d: "M1 6h4v4H1zM3 1v5M3 10v5M8 1v14M12 1v14" },
  { name: "角度線", d: "M1 11h4v4H1zM7 1h4v4H7zM5 11l3-6M5 12l9-5M5 13h9" },
  { name: "速度線", d: "M1 1h4v4H1zM8 11h4v4H8zM5 5l4 6M5 4l9 6M5 2h9" },
  { name: "平行線", d: "M3 6h4M5 4v4M2 13h4M4 11v4M9 3l5-2M9 12h5M11 10v4M7 9l6-4" },
  { name: "ピッチ", d: "M4 1v14M4 13l10-10" },
  { name: "チャネル", d: "M4 1v14M4 8l9-6M4 12l9-7M4 15l10-7" },
  { name: "三本線", d: "M1 1h4v4H1zM5 3h9M1 8h13M1 13h13" },
  { name: "五本線", d: "M1 1h4v4H1zM5 3h9M1 7h13M1 10h13M1 13h13" },
];

interface FootTool {
  name: string;
  art: ReactNode;
}

const footTools: FootTool[] = [
  {
    name: "メモ",
    art: (
      <>
        <rect x="3.500" y="3.500" width="8" height="11" fill="#fff" />
        <rect x="4" y="5" width="7" height="4" fill="#ffff30" stroke="none" />
        <path d="M9 5l4-4" strokeWidth="2" />
      </>
    ),
  },
  {
    name: "配色",
    art: (
      <>
        <rect x="1.500" y="1.500" width="6" height="7" fill="#ff4040" />
        <rect x="6.500" y="4.500" width="7" height="10" fill="#fff" />
        <rect x="7" y="5" width="3" height="5" fill="#3070ff" stroke="none" />
      </>
    ),
  },
  {
    name: "折れ線",
    art: (
      <>
        <rect x="1.500" y="2.500" width="13" height="11" fill="#fff" />
        <path d="M3 10l4-4 3 2 3 2" stroke="#e00000" />
      </>
    ),
  },
  {
    name: "更新",
    art: <path d="M1 6h5L3.500 9zM3 6c2-5 8-5 10-1M15 9h-5l2.500-3zM12 9c-2 5-6 5-9 2" fill="#fff" />,
  },
  {
    name: "追加",
    art: <path d="M6 2h4v4h4v4h-4v4H6v-4H2V6h4z" fill="#fff" />,
  },
];

const footTools2: FootTool[] = [
  {
    name: "拡大",
    art: (
      <>
        <rect x="1.500" y="2.500" width="10" height="9" fill="#fff" />
        <path d="M2 9l3-4 3 2 3-2" stroke="#e00000" />
        <path d="M12 1v13M10 10l4 4" />
      </>
    ),
  },
  {
    name: "重ね",
    art: (
      <>
        <rect x="1.500" y="1.500" width="10" height="9" fill="#fff" />
        <path d="M2 8l3-4 3 2" stroke="#e00000" />
        <rect x="7.500" y="5.500" width="7" height="9" fill="#c0c0c0" />
      </>
    ),
  },
  {
    name: "保存",
    art: (
      <>
        <rect x="1.500" y="4.500" width="12" height="9" fill="#fff" />
        <path d="M3 9l3-3 3 2" stroke="#e00000" />
        <path d="M9 6l5 5H9z" fill="#ffff30" />
      </>
    ),
  },
];

function ToolIcon({ name, children }: { name: string; children: ReactNode }) {
  return (
    <button type="button" aria-label={name} className="h-4 w-4 shrink-0 bg-[#c0c0c0]">
      <svg width="16" height="16" fill="none" stroke="#101010" aria-hidden="true">
        {children}
      </svg>
    </button>
  );
}

function ChartPane() {
  return (
    <Pane
      title="チャート"
      controls={["detach", "min", "max", "close"]}
      headClass="pl-[2px]"
      bodyClass="pt-[6px] pl-1 pb-[6px]"
    >
      <div className="flex gap-[5px]">
        <Select label="商品" value="USD/JPY" w="w-[89px]" />
        <Select label="足種" value="5分足" w="w-16" />
        <Select label="気配" value="買気配" w="w-[73px]" />
        <Select label="開始日" value="2016/04/13" w="w-[95px]" disabled />
        <Select label="終了日" value="2016/04/18" w="w-[96px]" disabled />
        <Btn w="w-[76px]">照会</Btn>
      </div>
      <div className="mt-[3px] flex gap-[3px]">
        <Select label="チャート種別" value="ローソク足" w="w-[90px]" />
        <Btn w="w-[95px]">画面保存　▼</Btn>
        <Btn w="w-[95px]">テクニカル保存▼</Btn>
        <Btn w="w-[95px]">テクニカル設定</Btn>
        <Btn w="w-[95px]">注文・建玉設定</Btn>
        <Btn w="w-[95px]">印刷</Btn>
      </div>
      <div className="mt-[3px] flex">
        <PriceChart />
        <div className="flex w-6 shrink-0 flex-col gap-[6px] bg-[#d6d6de] pt-[3px] pl-[3px]">
          {drawTools.map((tool, i) => (
            <div key={tool.name} className={i === 1 ? "flex pb-[7px]" : "flex"}>
              <ToolIcon name={tool.name}>
                <path d={tool.d} strokeWidth="1.500" />
              </ToolIcon>
            </div>
          ))}
        </div>
      </div>
      <div className="flex h-5 items-center border-y border-y-white bg-[#d6d6de]">
        <button type="button" aria-label="左へ" className="flex h-[15px] w-[15px] items-center justify-center border border-black">
          <Arrow dir="left" />
        </button>
        <div className="ml-px h-[15px] w-[378px] border border-black" />
        <button type="button" aria-label="右へ" className="ml-px flex h-[15px] w-[15px] items-center justify-center border border-black">
          <Arrow dir="right" />
        </button>
        <div className="ml-2 h-[15px] w-[6px] border border-black" />
        <div className="flex-1" />
        <div className="flex gap-[3px] border-l border-[#8c8c8c] pr-[3px] pl-1">
          {footTools.map((tool) => (
            <ToolIcon key={tool.name} name={tool.name}>
              {tool.art}
            </ToolIcon>
          ))}
        </div>
        <div className="flex gap-[3px] border-l border-[#8c8c8c] pr-1 pl-1">
          {footTools2.map((tool) => (
            <ToolIcon key={tool.name} name={tool.name}>
              {tool.art}
            </ToolIcon>
          ))}
        </div>
      </div>
    </Pane>
  );
}

/* ---------- positions ---------- */

const positionHeads = ["売買", "建玉数量", "決済可能", "約定価格", "決済通貨", "評価損益", ""];

function PositionPane() {
  return (
    <Pane
      title="建玉一覧"
      controls={["min", "max", "close"]}
      className="min-h-0 flex-1"
      headClass="pl-[2px]"
      bodyClass="flex flex-col pt-[6px] pl-1"
    >
      <div className="mr-[30px] flex h-[30px] shrink-0 items-center border-2 border-[#2a2a2a] bg-[#3e3e3e] pl-[5px] text-white">
        <Select label="商品" w="w-[178px]" />
        <span className="mr-[10px] ml-[18px]">売買</span>
        <Select label="売買" w="w-[45px]" />
        <div className="ml-[13px] flex gap-1">
          <Btn w="w-20" tone={BTN_DARK}>
            個別表示
          </Btn>
          <Btn w="w-20">サマリー表示</Btn>
          <Btn w="w-20">検索/更新</Btn>
          <Btn w="w-[88px]">
            <ExcelIcon />
            エクスポート
          </Btn>
        </div>
      </div>
      <div className="mt-[2px] flex shrink-0 items-center gap-[3px] pl-px text-white">
        <Btn w="w-20">全選択</Btn>
        <Btn w="w-20">全解除</Btn>
        <span className="mr-2 ml-[10px]">注文手法</span>
        <Select label="注文手法" value="単一注文" w="w-[86px]" />
        <div className="ml-px flex gap-1">
          <Btn w="w-20">決済</Btn>
          <Btn w="w-20" tone={BTN_RED}>
            全決済
          </Btn>
          <Btn w="w-20">建玉整理</Btn>
        </div>
      </div>
      <div className="mt-1 flex min-h-0 flex-1">
        <div className="min-w-0 flex-1 overflow-hidden bg-black">
          <table className="w-full table-fixed border-collapse text-white">
            <colgroup>
              <col className="w-9" />
              <col className="w-[120px]" />
              <col className="w-6" />
              <col className="w-[61px]" />
              <col className="w-9" />
              <col className="w-[66px]" />
              <col className="w-[66px]" />
              <col className="w-[66px]" />
              <col className="w-[83px]" />
              <col className="w-[90px]" />
              <col />
            </colgroup>
            <thead>
              <tr className="h-5">
                <th className={GRID_TH}>選択</th>
                <th className={GRID_TH}>約定成立日時</th>
                <th colSpan={2} className={GRID_TH}>商品</th>
                {positionHeads.map((head) => (
                  <th key={head} className={GRID_TH}>
                    {head}
                  </th>
                ))}
              </tr>
            </thead>
            <tbody>
              {Array.from({ length: 7 }, (_, row) => (
                <tr key={row} className="h-5 odd:bg-black even:bg-[#1e1e1e]">
                  {Array.from({ length: 11 }, (_, col) => (
                    <td key={col} className="border border-l-0 border-[#2c2c2c]" />
                  ))}
                </tr>
              ))}
            </tbody>
          </table>
        </div>
        <VScroll thumb="h-[51px]" />
      </div>
      <div className="flex h-[17px] shrink-0 items-center bg-[#f0f0f0]">
        <span className="flex w-[18px] justify-center">
          <Arrow dir="left" color="#404040" />
        </span>
        <span className="flex h-[15px] w-[535px] items-center justify-center gap-[2px] rounded-xs border border-[#9a9a9a] bg-[linear-gradient(#f6f6f6,#d0d0d0)]">
          <i className="h-[7px] w-px bg-[#606060]" />
          <i className="h-[7px] w-px bg-[#606060]" />
          <i className="h-[7px] w-px bg-[#606060]" />
        </span>
        <span className="flex-1" />
        <span className="mr-6">
          <Arrow dir="right" color="#404040" />
        </span>
      </div>
      <div className="h-1 shrink-0" />
    </Pane>
  );
}

function StatusBar() {
  return (
    <footer className="flex h-7 shrink-0 gap-[2px] border-t border-white bg-[#f0f0f0] pt-[2px] pl-1 font-['Noto_Sans',sans-serif] text-xs text-black">
      <div className="flex w-[175px] items-center gap-1 border-t border-l border-r border-[#a0a0a0] border-r-white pl-[2px]">
        <svg width="16" height="16" aria-hidden="true">
          <circle cx="8" cy="8" r="7.500" fill="#c8c8c8" stroke="#b0b0b0" />
          <circle cx="8" cy="8" r="5.500" fill="#686868" />
          <path d="M5 5l3 3 3-2" stroke="#fff" fill="none" />
        </svg>
        2016/04/18 09:31
      </div>
      <div className="flex-1 border-t border-l border-r border-[#a0a0a0] border-r-white" />
      <div className="flex w-11 items-center justify-center border-t border-l border-[#a0a0a0] text-[#8c8c8c]">CAP</div>
      <div className="flex w-[47px] items-center justify-center border-t border-l border-[#a0a0a0]">NUM</div>
    </footer>
  );
}

export default function App() {
  return (
    <div className="flex h-screen flex-col overflow-hidden bg-[#878787] font-['Liberation_Sans','Noto_Sans_CJK_JP',sans-serif] text-xs leading-4 [font-feature-settings:'palt']">
      <TitleBar />
      <TopArea />
      <main className="grid min-h-0 flex-1 grid-cols-[606px_minmax(0,1fr)] grid-rows-1 overflow-hidden">
        <div className="flex min-h-0 flex-col gap-[6px] border-r border-[#9c9c9c] pt-[6px] pr-px pl-[2px]">
          <RatePane />
          <OrderEntryPane />
          <OrderListPane />
        </div>
        <div className="flex min-h-0 w-[calc(100%+10px)] flex-col gap-[6px] pt-[6px] pl-1">
          <ChartPane />
          <PositionPane />
        </div>
      </main>
      <StatusBar />
    </div>
  );
}
